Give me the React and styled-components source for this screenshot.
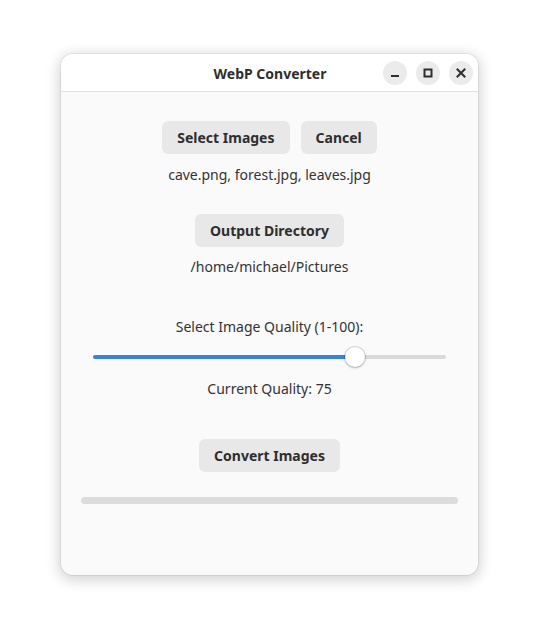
import React, { useState } from "react";
import styled, { createGlobalStyle } from "styled-components";

const GlobalStyle = createGlobalStyle`
  html, body {
    margin: 0;
    padding: 0;
    background: #ffffff;
    font-family: "Noto Sans", "Open Sans", sans-serif;
    color: #2e2e2e;
  }
`;

const Desktop = styled.div`
  width: 539px;
  height: 642px;
  padding: 54px 0 0 61px;
  box-sizing: border-box;
`;

const Window = styled.div`
  width: 417px;
  height: 521px;
  border-radius: 12px;
  background: #fafafa;
  overflow: hidden;
  display: flex;
  flex-direction: column;
  box-shadow: 0 0 0 1px rgba(0, 0, 0, 0.06), 0 3px 14px 2px rgba(0, 0, 0, 0.18);
`;

const HeaderBar = styled.div`
  height: 37px;
  flex: none;
  background: #ffffff;
  border-bottom: 1px solid #e2e2e2;
  display: grid;
  grid-template-columns: 1fr auto 1fr;
  align-items: center;
  padding: 0 5px 0 6px;
`;

const Title = styled.div`
  grid-column: 2;
  font-size: 14px;
  font-weight: 700;
  color: #2e2e2e;
  padding-top: 1px;
`;

const Controls = styled.div`
  grid-column: 3;
  justify-self: end;
  display: flex;
  gap: 9px;
  padding-top: 1px;
`;

const ControlButton = styled.button`
  width: 24px;
  height: 24px;
  border-radius: 50%;
  border: none;
  padding: 0;
  background: #ebebeb;
  color: #2e2e2e;
  display: flex;
  align-items: center;
  justify-content: center;
`;

const Content = styled.div`
  flex: 1;
  display: flex;
  flex-direction: column;
  align-items: center;
  padding: 29px 0 0;
`;

const ButtonRow = styled.div`
  display: flex;
  gap: 11px;
  margin-top: ${(p) => p.$top || 0}px;
`;

const Button = styled.button`
  height: 33px;
  padding: 0 15px;
  border: none;
  border-radius: 6px;
  background: #e8e8e8;
  color: #2e2e2e;
  font-family: inherit;
  font-size: 14px;
  font-weight: 700;
  margin-top: ${(p) => p.$top || 0}px;
`;

const Label = styled.div`
  font-size: 14px;
  line-height: 20px;
  color: #333333;
  margin-top: ${(p) => p.$top || 0}px;
`;

const SliderRow = styled.div`
  align-self: stretch;
  margin: ${(p) => p.$top || 0}px 32px 0;
  height: 22px;
  position: relative;
  display: flex;
  align-items: center;
`;

const Track = styled.div`
  width: 100%;
  height: 4px;
  border-radius: 2px;
  background: #dadada;
  overflow: hidden;
`;

const Fill = styled.div`
  height: 100%;
  background: #3584e4;
`;

const Knob = styled.div`
  position: absolute;
  top: 1px;
  width: 20px;
  height: 20px;
  margin-left: -10px;
  border-radius: 50%;
  background: #ffffff;
  box-shadow: 0 0 0 1px rgba(0, 0, 0, 0.12), 0 1px 3px rgba(0, 0, 0, 0.2);
`;

const Progress = styled.div`
  align-self: stretch;
  margin: ${(p) => p.$top || 0}px 20px 0;
  height: 7px;
  border-radius: 4px;
  background: #dcdcdc;
`;

export default function App() {
  const [quality] = useState(75);
  const files = ["cave.png", "forest.jpg", "leaves.jpg"];
  // slider range is 1..100, knob travels slightly inside the trough
  const frac = (quality - 1) / 99;
  const knobLeft = `calc(4px + ${frac} * (100% - 8px))`;

  return (
    <>
      <GlobalStyle />
      <Desktop>
        <Window>
          <HeaderBar>
            <Title>WebP Converter</Title>
            <Controls>
              <ControlButton aria-label="Minimize">
                <svg width="10" height="10" viewBox="0 0 10 10">
                  <rect x="1" y="7" width="8" height="2" fill="currentColor" />
                </svg>
              </ControlButton>
              <ControlButton aria-label="Maximize">
                <svg width="10" height="10" viewBox="0 0 10 10">
                  <rect x="1.5" y="1.5" width="7" height="7" fill="none" stroke="currentColor" strokeWidth="2" />
                </svg>
              </ControlButton>
              <ControlButton aria-label="Close">
                <svg width="10" height="10" viewBox="0 0 10 10">
                  <path d="M1.5 1.5 L8.5 8.5 M8.5 1.5 L1.5 8.5" stroke="currentColor" strokeWidth="2" strokeLinecap="square" />
                </svg>
              </ControlButton>
            </Controls>
          </HeaderBar>
          <Content>
            <ButtonRow>
              <Button>Select Images</Button>
              <Button>Cancel</Button>
            </ButtonRow>
            <Label $top={11}>{files.join(", ")}</Label>
            <Button $top={29}>Output Directory</Button>
            <Label $top={10}>/home/michael/Pictures</Label>
            <Label $top={40}>Select Image Quality (1-100):</Label>
            <SliderRow $top={9}>
              <Track>
                <Fill style={{ width: knobLeft }} />
              </Track>
              <Knob style={{ left: knobLeft }} />
            </SliderRow>
            <Label $top={11}>Current Quality: {quality}</Label>
            <Button $top={40}>Convert Images</Button>
            <Progress $top={25} />
          </Content>
        </Window>
      </Desktop>
    </>
  );
}
